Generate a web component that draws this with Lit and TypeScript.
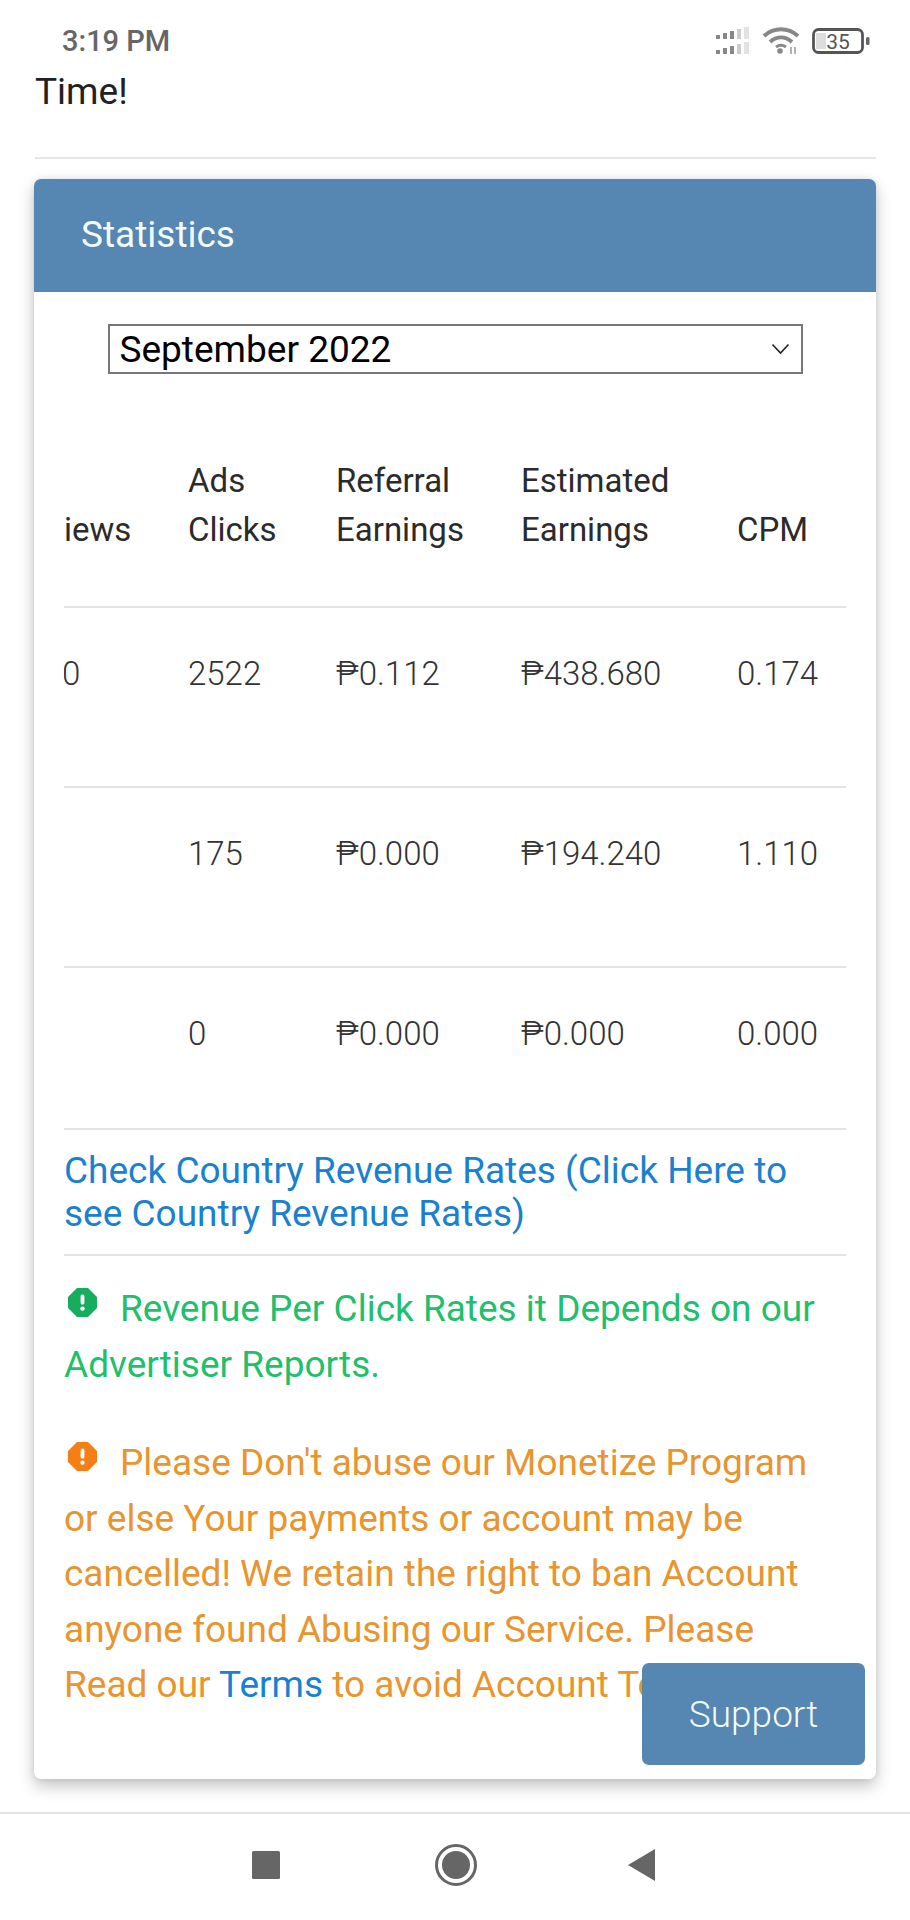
import { LitElement, html, css, svg } from "lit";
import { customElement } from "lit/decorators.js";

const rows = [
  { views: "0", ads: "2522", ref: "₱0.112", est: "₱438.680", cpm: "0.174" },
  { views: "", ads: "175", ref: "₱0.000", est: "₱194.240", cpm: "1.110" },
  { views: "", ads: "0", ref: "₱0.000", est: "₱0.000", cpm: "0.000" },
];

const octagon = (color: string) => html`<svg class="alert-icon" viewBox="0 0 29 29" aria-hidden="true">
  <path fill=${color} d="M9 0h11l9 9v11l-9 9H9l-9-9V9z"/>
  <rect x="12.600" y="6.500" width="3.800" height="10" rx="1.600" fill="#fff"/>
  <circle cx="14.500" cy="20.600" r="2.200" fill="#fff"/>
</svg>`;

const signalRow = (y: number) => svg`
  <rect x="0" y="${y + 8}" width="4" height="4" fill="#888"/>
  <rect x="7" y="${y + 6}" width="4" height="6" fill="#888"/>
  <rect x="14" y="${y + 4}" width="4" height="8" fill="#888"/>
  <rect x="21" y="${y + 2}" width="4" height="10" fill="#ccc"/>
  <rect x="28" y="${y}" width="5" height="12" fill="#e2e2e2"/>`;

@customElement("app-root")
export class AppRoot extends LitElement {
  static styles = css`
    :host {
      display: flex;
      flex-direction: column;
      width: 910px;
      height: 1920px;
      overflow: hidden;
      position: relative;
      background: #fff;
      font-family: Roboto, "Liberation Sans", sans-serif;
      color: #212121;
    }
    .status {
      height: 70px;
      box-sizing: border-box;
      padding: 11px 40px 0 62px;
      display: flex;
      align-items: center;
      justify-content: space-between;
      flex: none;
    }
    .time { font-size: 29px; font-weight: 500; color: #666; }
    .status-icons { display: flex; align-items: center; gap: 12px; }
    .sig { width: 34px; height: 28px; }
    .wifi { width: 38px; height: 28px; }
    .batt { width: 58px; height: 26px; }
    .main { flex: 1; padding: 0 34px; }
    .intro { font-size: 37px; line-height: 44px; margin-left: 1px; }
    .rule { height: 2px; background: #e6e6e6; margin: 43px 0 0 1px; }
    .card {
      margin-top: 20px;
      background: #fff;
      border-radius: 7px;
      box-shadow: 0 7px 16px rgba(0, 0, 0, 0.24), 0 0 6px rgba(0, 0, 0, 0.08);
      padding-bottom: 66px;
    }
    .card-head {
      height: 113px;
      box-sizing: border-box;
      padding: 0 0 2px 47px;
      background: #5686b2;
      border-radius: 7px 7px 0 0;
      color: #f3fbfb;
      font-size: 37px;
      display: flex;
      align-items: center;
    }
    .select-wrap { position: relative; width: 695px; margin: 32px auto 0; }
    select {
      appearance: none;
      display: block;
      width: 100%;
      height: 50px;
      box-sizing: border-box;
      border: 2px solid #777;
      border-radius: 0;
      background: #fff;
      color: #000;
      font: 37px Roboto, sans-serif;
      padding: 0 10px;
      outline: none;
    }
    .chev { position: absolute; right: 13px; top: 19px; width: 19px; height: 12px; pointer-events: none; }
    .body { padding: 0 30px; }
    .table { overflow: hidden; margin-top: 82px; }
    .tr {
      display: grid;
      grid-template-columns: 145px 148px 185px 216px 1fr;
      margin-left: -21px;
      font-size: 33px;
      line-height: 49px;
    }
    .head { align-items: end; padding-bottom: 52px; font-weight: 400; color: #2b2b2b; }
    .sep { border-top: 2px solid #e3e3e3; }
    .data { font-weight: 300; color: #333; padding: 41px 0 88px; }
    .data.last { padding-bottom: 70px; }
    .views0 { padding-left: 19px; }
    .link-row {
      border-top: 2px solid #e3e3e3;
      border-bottom: 2px solid #e3e3e3;
      padding: 19px 0;
      font-size: 37px;
      line-height: 43px;
      color: #1a80d0;
    }
    .msg { font-size: 37px; line-height: 55.5px; }
    .ok { color: #1fbf6c; margin-top: 25px; }
    .warn { color: #e8952f; margin-top: 43px; }
    .warn a, .link-row a { color: #1a80d0; text-decoration: none; }
    .alert-icon {
      width: 29px;
      height: 29px;
      vertical-align: 4px;
      margin: 0 23px 0 4px;
    }
    .support {
      position: absolute;
      left: 642px;
      top: 1663px;
      width: 223px;
      height: 102px;
      background: #5686b2;
      border-radius: 7px;
      color: #f3fbfb;
      font-size: 37px;
      font-weight: 300;
      display: flex;
      align-items: center;
      justify-content: center;
    }
    .nav {
      flex: none;
      height: 108px;
      border-top: 2px solid #e2e2e2;
      box-sizing: border-box;
      padding: 0 3px 4px 0;
      display: flex;
      align-items: center;
      justify-content: center;
    }
    .nav svg { display: block; }
    .nav-sq { width: 28px; height: 28px; margin-right: 155px; }
    .nav-ci { width: 42px; height: 42px; margin-right: 151px; }
    .nav-tr { width: 28px; height: 32px; }
  `;

  render() {
    return html`
      <div class="status">
        <span class="time">3:19 PM</span>
        <div class="status-icons">
          <svg class="sig" viewBox="0 0 34 28" aria-hidden="true">${signalRow(0)}${signalRow(15)}</svg>
          <svg class="wifi" viewBox="0 0 38 28" aria-hidden="true">
            <path d="M2 9C12 0 26 0 36 9" fill="none" stroke="#888" stroke-width="4"/>
            <path d="M8 15c7-6 15-6 22 0" fill="none" stroke="#888" stroke-width="4"/>
            <path d="M14 20c3.500-2.500 6.500-2.500 10 0" fill="none" stroke="#888" stroke-width="3"/>
            <circle cx="18" cy="24" r="2.800" fill="#888"/>
            <path d="M29 27v-7M33 20v7" stroke="#999" stroke-width="1.500"/>
          </svg>
          <svg class="batt" viewBox="0 0 58 26" aria-hidden="true">
            <rect x="4" y="5" width="10" height="16" fill="#ddd"/>
            <rect x="1.500" y="1.500" width="49" height="23" rx="5" fill="none" stroke="#555" stroke-width="2.800"/>
            <rect x="54" y="9" width="3.500" height="8" rx="1.500" fill="#666"/>
            <text x="26" y="20.500" text-anchor="middle" font-size="21" fill="#555" font-family="Roboto, sans-serif">35</text>
          </svg>
        </div>
      </div>

      <div class="main">
        <div class="intro">Time!</div>
        <div class="rule"></div>
        <section class="card">
          <div class="card-head">Statistics</div>
          <div class="select-wrap">
            <select><option>September 2022</option></select>
            <svg class="chev" viewBox="0 0 19 12" aria-hidden="true">
              <path d="M1.500 1.500L9.500 10l8-8.500" fill="none" stroke="#222" stroke-width="1.600"/>
            </svg>
          </div>
          <div class="body">
            <div class="table">
              <div class="tr head">
                <div>Views</div>
                <div>Ads<br />Clicks</div>
                <div>Referral<br />Earnings</div>
                <div>Estimated<br />Earnings</div>
                <div>CPM</div>
              </div>
              ${rows.map(
                (r, i) => html`<div class="tr data sep ${i === rows.length - 1 ? "last" : ""}">
                  <div class="views0">${r.views}</div>
                  <div>${r.ads}</div>
                  <div>${r.ref}</div>
                  <div>${r.est}</div>
                  <div>${r.cpm}</div>
                </div>`
              )}
            </div>
            <div class="link-row">
              <a href="#">Check Country Revenue Rates (Click Here to see Country Revenue Rates)</a>
            </div>
            <div class="msg ok">${octagon("#16ad5f")}Revenue Per Click Rates it Depends on our Advertiser Reports.</div>
            <div class="msg warn">${octagon("#f57f17")}Please Don't abuse our Monetize Program or else Your payments or account may be cancelled! We retain the right to ban Account anyone found Abusing our Service. Please Read our <a href="#">Terms</a> to avoid Account Termination</div>
          </div>
        </section>
      </div>

      <div class="support">Support</div>

      <div class="nav">
        <svg class="nav-sq" viewBox="0 0 28 28" aria-hidden="true"><rect width="28" height="28" rx="1.500" fill="#666"/></svg>
        <svg class="nav-ci" viewBox="0 0 42 42" aria-hidden="true">
          <circle cx="21" cy="21" r="19.500" fill="none" stroke="#666" stroke-width="3"/>
          <circle cx="21" cy="21" r="14" fill="#666"/>
        </svg>
        <svg class="nav-tr" viewBox="0 0 28 32" aria-hidden="true"><path d="M27 0v32L0 16z" fill="#666"/></svg>
      </div>
    `;
  }
}
